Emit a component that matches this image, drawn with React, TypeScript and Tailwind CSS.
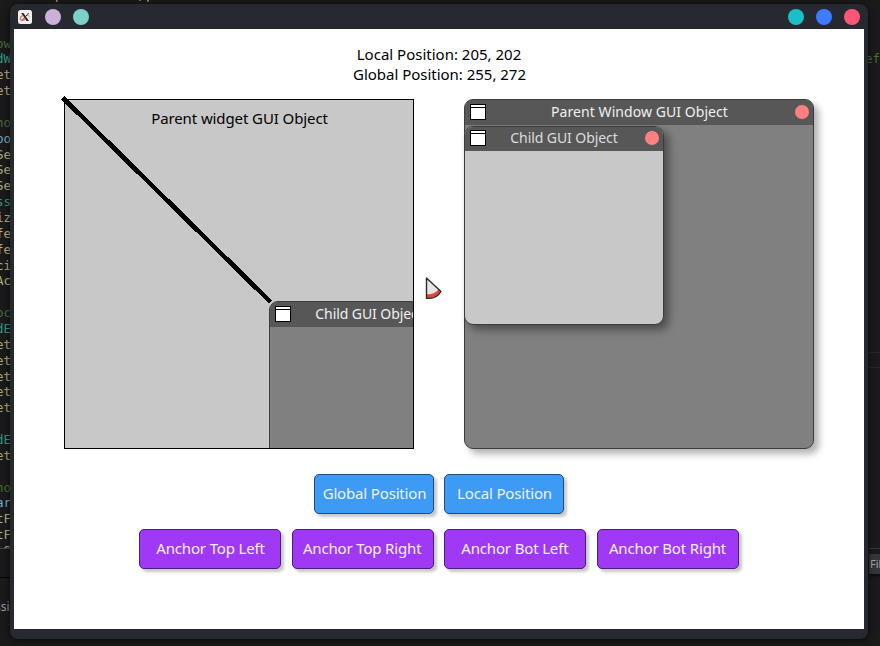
import React from "react";

const codeLines: [string, string][] = [
  ["ow", "text-[#4b6b3c]"],
  ["dW", "text-[#369584]"],
  ["et", "text-[#a9a37e]"],
  ["et", "text-[#a9a37e]"],
  ["", ""],
  ["ho", "text-[#4b6b3c]"],
  ["po", "text-[#79a9c6]"],
  ["Se", "text-[#b3ae84]"],
  ["Se", "text-[#b3ae84]"],
  ["Se", "text-[#b3ae84]"],
  ["ss", "text-[#369584]"],
  ["iz", "text-[#b3ae84]"],
  ["fe", "text-[#b3ae84]"],
  ["fe", "text-[#b3ae84]"],
  ["ci", "text-[#b3ae84]"],
  ["Ac", "text-[#b3ae84]"],
  ["", ""],
  ["oc", "text-[#4b6b3c]"],
  ["dE", "text-[#369584]"],
  ["et", "text-[#a9a37e]"],
  ["et", "text-[#a9a37e]"],
  ["et", "text-[#a9a37e]"],
  ["et", "text-[#a9a37e]"],
  ["et", "text-[#a9a37e]"],
  ["", ""],
  ["dE", "text-[#369584]"],
  ["et", "text-[#a9a37e]"],
  ["", ""],
  ["ho", "text-[#4b6b3c]"],
  ["ar", "text-[#79a9c6]"],
  ["tF", "text-[#b3ae84]"],
  ["tF", "text-[#b3ae84]"],
  ["tS", "text-[#b3ae84]"],
];

function WindowGlyph() {
  return (
    <span className="flex h-4 w-4 shrink-0 flex-col border border-black bg-white pt-[2px]">
      <span className="h-px w-full bg-black" />
    </span>
  );
}

function TitleBar({
  title,
  barClass = "h-[25px] pb-px",
  titleClass = "text-[#f0f0f0]",
}: {
  title: string;
  barClass?: string;
  titleClass?: string;
}) {
  return (
    <div className={`flex shrink-0 items-center bg-[#575757] pl-[5px] pr-1 ${barClass}`}>
      <WindowGlyph />
      <span className={`flex-1 whitespace-nowrap pr-[3px] text-center text-[14px] leading-[22px] ${titleClass}`}>{title}</span>
      <span className="h-[14px] w-[14px] shrink-0 rounded-full bg-[#ff8080]" />
    </div>
  );
}

function Button({ label, className }: { label: string; className: string }) {
  return (
    <button
      className={`flex h-10 shrink-0 items-center justify-center whitespace-nowrap rounded-[5px] border pb-[2px] text-[15px] tracking-[-0.16px] text-[#f2f2f2] shadow-[3px_3px_3px_rgba(0,0,0,0.22)] ${className}`}
    >
      {label}
    </button>
  );
}

function EditorBackdrop() {
  return (
    <>
      <div className="absolute left-0 top-[35px] h-[514px] w-[14px] overflow-hidden pt-[0.5px] font-['DejaVu_Sans_Mono',monospace] text-[12.5px]">
        {codeLines.map(([text, color], i) => (
          <div key={i} className={`-ml-[4px] h-[15.86px] leading-[15.86px] ${color}`}>{text}</div>
        ))}
      </div>
      <div className="absolute left-0 top-0 h-1 w-full overflow-hidden font-['DejaVu_Sans_Mono',monospace] text-[12.5px] leading-4 text-[#b3ae84]">
        <span className="absolute -top-[13px] left-[55px]">p</span>
        <span className="absolute -top-[12px] left-[137px]">);</span>
      </div>
      <div className="absolute left-0 top-[548px] h-px w-[10px] bg-[#444]" />
      <div className="absolute left-0 top-[577px] h-px w-[10px] bg-black" />
      <div className="absolute -left-[5px] top-[599px] font-['Noto_Sans',sans-serif] text-[12px] leading-4 text-[#999]">ssi</div>
      <div className="absolute left-[865px] top-[51px] font-['DejaVu_Sans_Mono',monospace] text-[12.5px] leading-4 text-[#4b6b3c]">ef</div>
      <div className="absolute left-[869px] top-[352px] h-4 w-3 border-y border-[#262626]" />
      <div className="absolute left-[869px] top-[548px] h-px w-3 bg-[#353535]" />
      <div className="absolute left-[869px] top-[554px] h-5 w-[11px] overflow-hidden bg-[#353638] pl-px font-['Noto_Sans',sans-serif] text-[11px] leading-5 text-[#a8a8a8] shadow-[0_2px_2px_#0c0c0c]">Fil</div>
    </>
  );
}

export default function App() {
  return (
    <div className="relative h-[646px] w-[880px] overflow-hidden bg-[#1a1a1a] font-['Noto_Sans',sans-serif]">
      <EditorBackdrop />
      <div className="absolute left-[10px] top-1 flex h-[635px] w-[858px] flex-col rounded-lg bg-[#262a30] px-1 shadow-[0_1px_6px_rgba(0,0,0,0.7)]">
        <header className="flex h-[25px] shrink-0 items-center justify-between px-1">
          <div className="flex items-center gap-3">
            <svg viewBox="0 0 14 14" className="mr-px h-[14px] w-[14px]" fill="none">
              <rect width="14" height="14" rx="2.5" fill="#f0efec" />
              <path d="M3.2 3 8.6 11h2.4L5.4 3Z" fill="#222" />
              <path d="m10.6 3-3 3.6M6.4 8 3.6 11" stroke="#333" strokeWidth="1" />
              <path d="M5 5.4C3.2 6.2 2 8 2.5 9.4c.8 1.5 3.5.7 5.3-.5" stroke="#db765e" strokeWidth="1.2" />
              <path d="M9 5.4c2-.6 2.9.3 2.2 1.8" stroke="#bba58f" strokeWidth="1" />
            </svg>
            <span className="h-4 w-4 rounded-full bg-[#cdb0d7]" />
            <span className="h-4 w-4 rounded-full bg-[#7dd0c8]" />
          </div>
          <div className="flex items-center gap-3">
            <span className="h-4 w-4 rounded-full bg-[#1ac0c9]" />
            <span className="h-4 w-4 rounded-full bg-[#3f7bff]" />
            <span className="h-4 w-4 rounded-full bg-[#ff5578]" />
          </div>
        </header>

        <main className="h-[600px] w-[850px] bg-white pt-[15px]">
          <div className="text-center text-[15px] leading-5 text-black">
            <p>Local Position: 205, 202</p>
            <p className="pl-px tracking-[-0.02px]">Global Position: 255, 272</p>
          </div>

          <section className="mt-[15px] flex justify-between px-[50px]">
            <div className="relative h-[350px] w-[350px] border border-black bg-[#c8c8c8]">
              <p className="pl-px pt-[8px] text-center text-[15px] leading-5 tracking-[-0.1px] text-black">Parent widget GUI Object</p>
              <div className="absolute inset-0 overflow-hidden">
                <div className="absolute left-[204px] top-[201px] flex h-[200px] w-[200px] flex-col overflow-hidden rounded-[9px] border border-[#3c3c3c] bg-[#808080]">
                  <TitleBar title="Child GUI Object" titleClass="text-[#f0f0f0] tracking-[-0.08px]" />
                </div>
              </div>
              <svg className="absolute -left-1 -top-1 h-[216px] w-[216px]" viewBox="0 0 216 216" shapeRendering="crispEdges">
                <path d="M2 2 209.5 206" stroke="#000" strokeWidth="4.6" />
              </svg>
            </div>

            <div className="flex h-[350px] w-[350px] flex-col rounded-[9px] border border-[#3c3c3c] bg-[#808080] shadow-[5px_5px_7px_rgba(0,0,0,0.3)]">
              <div className="overflow-hidden rounded-t-lg">
                <TitleBar title="Parent Window GUI Object" titleClass="text-[#f0f0f0] tracking-[0.06px] pl-px" />
              </div>
              <div className="-ml-px mt-px flex h-[199px] w-[200px] flex-col overflow-hidden rounded-[9px] border border-[#3c3c3c] bg-[#c8c8c8] shadow-[5px_5px_8px_rgba(0,0,0,0.4)]">
                <TitleBar title="Child GUI Object" barClass="h-6 pb-[2px]" titleClass="text-[#dddddd] tracking-[-0.08px]" />
              </div>
            </div>
          </section>

          <section className="mt-[25px] flex justify-center gap-[10px]">
            <Button label="Global Position" className="w-[120px] border-[#1d4e7c] bg-[#3d9bf6] pl-px" />
            <Button label="Local Position" className="w-[120px] border-[#1d4e7c] bg-[#3d9bf6] pl-px" />
          </section>
          <section className="mt-[15px] flex justify-center gap-[10.67px]">
            <Button label="Anchor Top Left" className="w-[142px] border-[#501b7b] bg-[#a039f6] pl-px" />
            <Button label="Anchor Top Right" className="w-[142px] border-[#501b7b] bg-[#a039f6] pr-px" />
            <Button label="Anchor Bot Left" className="w-[142px] border-[#501b7b] bg-[#a039f6] pr-px" />
            <Button label="Anchor Bot Right" className="w-[142px] border-[#501b7b] bg-[#a039f6] pr-px" />
          </section>
        </main>
      </div>

      <svg className="absolute left-[424px] top-[275px] h-[26px] w-5" viewBox="0 0 20 26">
        <path d="M2.5 3v20.2C8.5 24 14 21.5 17 16.5Z" fill="#e6e6e6" />
        <path d="M3 19.2c5 .2 9-1.4 11.5-4.8l2.5 2.2C14 21.5 8.5 24 3 23.2Z" fill="#dd4c34" />
        <path d="M2.5 3v20.2C8.5 24 14 21.5 17 16.5Z" fill="none" stroke="#292929" strokeWidth="1.4" strokeLinejoin="round" />
      </svg>
    </div>
  );
}
